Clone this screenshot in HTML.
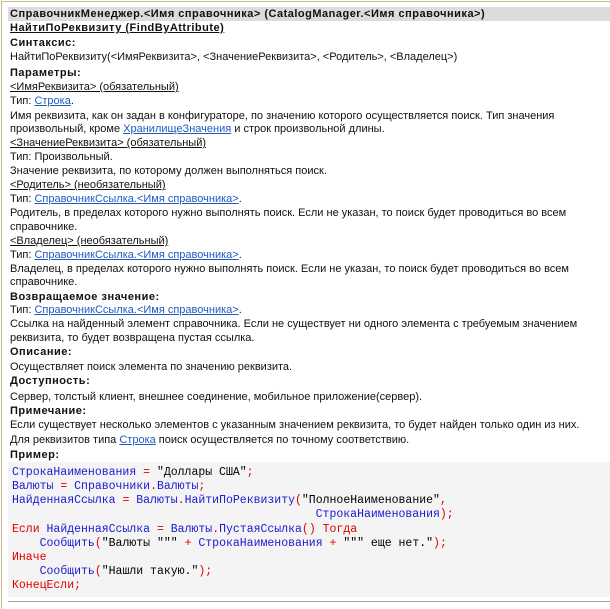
<!DOCTYPE html>
<html><head><meta charset="utf-8"><style>
html,body{margin:0;padding:0;background:#fff;width:610px;height:609px;overflow:hidden;position:relative}
body{font-family:"Liberation Sans","DejaVu Sans",sans-serif;font-size:11px;color:#111}
.l{position:absolute;left:10px;white-space:nowrap;line-height:14px}
.b{font-weight:bold;letter-spacing:0.5px}
.u{text-decoration:underline}
a{color:#1f5bbf;text-decoration:underline}
#frameT{position:absolute;left:1px;top:1px;width:609px;height:1px;background:#c8b88a}
#frameL{position:absolute;left:1px;top:1px;width:1px;height:608px;background:#c8b88a}
#hdr{position:absolute;left:8px;top:7px;width:602px;height:14px;background:#dcdcdc}
#code{position:absolute;left:8px;top:462px;width:602px;height:135px;background:#f4f4f4}
#hr{position:absolute;left:8px;top:601px;width:602px;height:1px;background:#a0a0a0}
.c{position:absolute;left:12px;white-space:pre;line-height:14px;font-family:"Liberation Mono","Courier New",monospace;font-size:11.5px;color:#000}
.k{color:#e00000}.i{color:#1a1ad0}
</style></head><body>
<div id="frameT"></div><div id="frameL"></div><div id="hdr"></div>
<div class="l b" style="top:7px">СправочникМенеджер.&lt;Имя справочника&gt; (CatalogManager.&lt;Имя справочника&gt;)</div>
<div class="l b u" style="top:21px">НайтиПоРеквизиту (FindByAttribute)</div>
<div class="l b" style="top:36px">Синтаксис:</div>
<div class="l" style="top:50px">НайтиПоРеквизиту(&lt;ИмяРеквизита&gt;, &lt;ЗначениеРеквизита&gt;, &lt;Родитель&gt;, &lt;Владелец&gt;)</div>
<div class="l b" style="top:66px">Параметры:</div>
<div class="l u" style="top:80px">&lt;ИмяРеквизита&gt; (обязательный)</div>
<div class="l" style="top:94px">Тип: <a>Строка</a>.</div>
<div class="l" style="top:109px">Имя реквизита, как он задан в конфигураторе, по значению которого осуществляется поиск. Тип значения</div>
<div class="l" style="top:122px">произвольный, кроме <a>ХранилищеЗначения</a> и строк произвольной длины.</div>
<div class="l u" style="top:136px">&lt;ЗначениеРеквизита&gt; (обязательный)</div>
<div class="l" style="top:150px">Тип: Произвольный.</div>
<div class="l" style="top:164px">Значение реквизита, по которому должен выполняться поиск.</div>
<div class="l u" style="top:178px">&lt;Родитель&gt; (необязательный)</div>
<div class="l" style="top:192px">Тип: <a>СправочникСсылка.&lt;Имя справочника&gt;</a>.</div>
<div class="l" style="top:206px">Родитель, в пределах которого нужно выполнять поиск. Если не указан, то поиск будет проводиться во всем</div>
<div class="l" style="top:220px">справочнике.</div>
<div class="l u" style="top:234px">&lt;Владелец&gt; (необязательный)</div>
<div class="l" style="top:248px">Тип: <a>СправочникСсылка.&lt;Имя справочника&gt;</a>.</div>
<div class="l" style="top:262px">Владелец, в пределах которого нужно выполнять поиск. Если не указан, то поиск будет проводиться во всем</div>
<div class="l" style="top:275px">справочнике.</div>
<div class="l b" style="top:290px">Возвращаемое значение:</div>
<div class="l" style="top:303px">Тип: <a>СправочникСсылка.&lt;Имя справочника&gt;</a>.</div>
<div class="l" style="top:317px">Ссылка на найденный элемент справочника. Если не существует ни одного элемента с требуемым значением</div>
<div class="l" style="top:331px">реквизита, то будет возвращена пустая ссылка.</div>
<div class="l b" style="top:345px">Описание:</div>
<div class="l" style="top:360px">Осуществляет поиск элемента по значению реквизита.</div>
<div class="l b" style="top:374px">Доступность:</div>
<div class="l" style="top:390px">Сервер, толстый клиент, внешнее соединение, мобильное приложение(сервер).</div>
<div class="l b" style="top:404px">Примечание:</div>
<div class="l" style="top:418px">Если существует несколько элементов с указанным значением реквизита, то будет найден только один из них.</div>
<div class="l" style="top:433px">Для реквизитов типа <a>Строка</a> поиск осуществляется по точному соответствию.</div>
<div class="l b" style="top:448px">Пример:</div>
<div id="code"></div>
<div class="c" style="top:466px"><span class="i">СтрокаНаименования</span> <span class="k">=</span> "Доллары США"<span class="k">;</span></div>
<div class="c" style="top:480px"><span class="i">Валюты</span> <span class="k">=</span> <span class="i">Справочники</span><span class="k">.</span><span class="i">Валюты</span><span class="k">;</span></div>
<div class="c" style="top:494px"><span class="i">НайденнаяСсылка</span> <span class="k">=</span> <span class="i">Валюты</span><span class="k">.</span><span class="i">НайтиПоРеквизиту</span><span class="k">(</span>"ПолноеНаименование"<span class="k">,</span></div>
<div class="c" style="top:508px">                                            <span class="i">СтрокаНаименования</span><span class="k">);</span></div>
<div class="c" style="top:523px"><span class="k">Если</span> <span class="i">НайденнаяСсылка</span> <span class="k">=</span> <span class="i">Валюты</span><span class="k">.</span><span class="i">ПустаяСсылка</span><span class="k">()</span> <span class="k">Тогда</span></div>
<div class="c" style="top:537px">    <span class="i">Сообщить</span><span class="k">(</span>"Валюты """ <span class="k">+</span> <span class="i">СтрокаНаименования</span> <span class="k">+</span> """ еще нет."<span class="k">);</span></div>
<div class="c" style="top:551px"><span class="k">Иначе</span></div>
<div class="c" style="top:565px">    <span class="i">Сообщить</span><span class="k">(</span>"Нашли такую."<span class="k">);</span></div>
<div class="c" style="top:579px"><span class="k">КонецЕсли;</span></div>
<div id="hr"></div>
</body></html>
